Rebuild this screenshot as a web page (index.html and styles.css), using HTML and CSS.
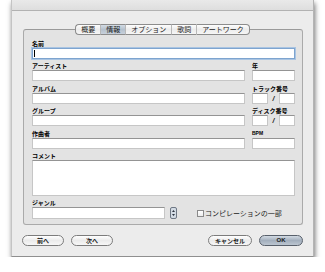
FILE: index.html
```html
<!DOCTYPE html>
<html lang="ja">
<head>
    <meta charset="UTF-8">
    <title>情報</title>
    <link rel="stylesheet" href="styles.css">
</head>
<body>
    <div class="window">
        <div class="titlebar"></div>
        <div class="tabs">
            <span class="tab">概要</span>
            <span class="tab active">情報</span>
            <span class="tab">オプション</span>
            <span class="tab">歌詞</span>
            <span class="tab">アートワーク</span>
        </div>
        <div class="panel">
            <!-- 名前 -->
            <div class="row">
                <div class="field full">
                    <div class="label">名前</div>
                    <div class="box focus"><span class="caret"></span></div>
                </div>
            </div>
            <div class="row">
                <div class="field main">
                    <div class="label">アーティスト</div>
                    <div class="box"></div>
                </div>
                <div class="field side">
                    <div class="label">年</div>
                    <div class="box"></div>
                </div>
            </div>
            <div class="row">
                <div class="field main">
                    <div class="label">アルバム</div>
                    <div class="box"></div>
                </div>
                <div class="field side">
                    <div class="label">トラック番号</div>
                    <div class="pair">
                        <div class="box small"></div>
                        <span class="slash">/</span>
                        <div class="box small"></div>
                    </div>
                </div>
            </div>
            <div class="row">
                <div class="field main">
                    <div class="label">グループ</div>
                    <div class="box"></div>
                </div>
                <div class="field side">
                    <div class="label">ディスク番号</div>
                    <div class="pair">
                        <div class="box small"></div>
                        <span class="slash">/</span>
                        <div class="box small"></div>
                    </div>
                </div>
            </div>
            <div class="row">
                <div class="field main">
                    <div class="label">作曲者</div>
                    <div class="box"></div>
                </div>
                <div class="field side">
                    <div class="label latin">BPM</div>
                    <div class="box"></div>
                </div>
            </div>
            <div class="row">
                <div class="field full">
                    <div class="label">コメント</div>
                    <div class="box comment"></div>
                </div>
            </div>
            <!-- ジャンル -->
            <div class="row">
                <div class="field">
                    <div class="label">ジャンル</div>
                    <div class="genre">
                        <div class="box genre-box"></div>
                        <svg class="stepper" width="7" height="12" viewBox="0 0 7 12">
                            <rect x="0.5" y="0.5" width="6" height="11" rx="1.5" fill="#d3dbe4" stroke="#6f7884"/>
                            <path d="M2 5 L3.5 3 L5 5 Z" fill="#2c3440"/>
                            <path d="M2 7 L3.5 9 L5 7 Z" fill="#2c3440"/>
                        </svg>
                        <label class="check"><span class="checkbox"></span>コンピレーションの一部</label>
                    </div>
                </div>
            </div>
        </div>
        <div class="buttons">
            <div class="group">
                <button class="btn">前へ</button>
                <button class="btn">次へ</button>
            </div>
            <div class="group">
                <button class="btn">キャンセル</button>
                <button class="btn default">OK</button>
            </div>
        </div>
    </div>
</body>
</html>
```

FILE: styles.css
```css
body {
    margin: 0;
    background: #fff;
    font-family: "Noto Sans CJK JP", "Liberation Sans", sans-serif;
    color: #111;
}

.window {
    margin-left: 11px;
    width: 303px;
    height: 257px;
    box-sizing: border-box;
    background: #ececec;
    border-left: 1px solid #c4c4c4;
    border-right: 1px solid #b4b4b4;
    border-bottom: 1px solid #8f8f8f;
    box-shadow: 1px 3px 5px rgba(0, 0, 0, 0.55);
}

.titlebar {
    height: 10px;
    background: linear-gradient(#e9e9e9, #dedede);
    border-bottom: 1px solid #b2b2b2;
}

.tabs {
    display: flex;
    justify-content: center;
    margin: 13px auto -6px;
    position: relative;
    z-index: 1;
}

.tab {
    height: 9px;
    line-height: 9px;
    padding: 0 5px;
    font-size: 7px;
    color: #1a1a1a;
    background: linear-gradient(#fdfdfd, #ececec 50%, #f6f6f6);
    border-top: 1px solid #8c8c8c;
    border-bottom: 1px solid #8c8c8c;
    border-left: 1px solid #b8b8b8;
}

.tab:first-child {
    border-left: 1px solid #8c8c8c;
    border-radius: 4px 0 0 4px;
}

.tab:last-child {
    border-right: 1px solid #8c8c8c;
    border-radius: 0 4px 4px 0;
}

.tab.active {
    background: linear-gradient(#d3dbe4, #b5c1ce 50%, #c8d1db);
}

.panel {
    margin-left: 11px;
    width: 280px;
    box-sizing: border-box;
    padding: 9px 7px 5px 8px;
    background: #e3e3e3;
    border: 1px solid #aaaaaa;
    border-top-color: #9a9a9a;
    border-radius: 3px;
}

.row {
    display: flex;
    gap: 7px;
    margin-bottom: 2.4px;
}

.row:last-child {
    margin-bottom: 0;
}

.field.full {
    width: 263px;
}

.field.main {
    width: 213px;
}

.field.side {
    width: 43px;
}

.label {
    height: 9px;
    line-height: 9px;
    font-size: 6px;
    font-weight: bold;
    color: #000;
}

.label.latin {
    font-family: "Liberation Sans", sans-serif;
    font-size: 5px;
}

.box {
    height: 11px;
    box-sizing: border-box;
    background: #fff;
    border: 1px solid #c6c6c6;
    border-top-color: #949494;
}

.box.focus {
    border: 1px solid #7ea4cf;
    box-shadow: 0 0 0 1px #a9c4e2;
    display: flex;
    align-items: center;
    padding-left: 1px;
}

.caret {
    width: 1px;
    height: 7px;
    background: #000;
}

.pair {
    display: flex;
    align-items: center;
}

.box.small {
    width: 16px;
}

.slash {
    width: 11px;
    text-align: center;
    font-size: 7px;
    font-weight: bold;
    font-style: italic;
    font-family: "Liberation Sans", sans-serif;
    line-height: 11px;
}

.box.comment {
    height: 36px;
}

.genre {
    display: flex;
    align-items: center;
}

.box.genre-box {
    width: 133px;
    height: 12px;
}

.stepper {
    margin-left: 5px;
}

.check {
    display: flex;
    align-items: center;
    margin-left: 20px;
    font-size: 7px;
    color: #1a1a1a;
}

.checkbox {
    width: 7px;
    height: 7px;
    box-sizing: border-box;
    margin-right: 1px;
    background: linear-gradient(#fff, #ececec);
    border: 1px solid #8a8a8a;
}

.buttons {
    display: flex;
    justify-content: space-between;
    padding: 0 10px;
    margin-top: 10px;
}

.group {
    display: flex;
    gap: 7px;
}

.btn {
    height: 11px;
    min-width: 42px;
    padding: 0 6px;
    font-family: inherit;
    font-size: 6px;
    font-weight: bold;
    line-height: 9px;
    color: #1a1a1a;
    background: linear-gradient(#ffffff, #ebebeb 50%, #f7f7f7);
    border: 1px solid #7c7c7c;
    border-radius: 6px;
}

.btn.default {
    min-width: 44px;
    font-family: "Liberation Sans", sans-serif;
    background: linear-gradient(#d2dae3, #a3afbd 50%, #bcc6d1);
    border-color: #58606b;
}
```
